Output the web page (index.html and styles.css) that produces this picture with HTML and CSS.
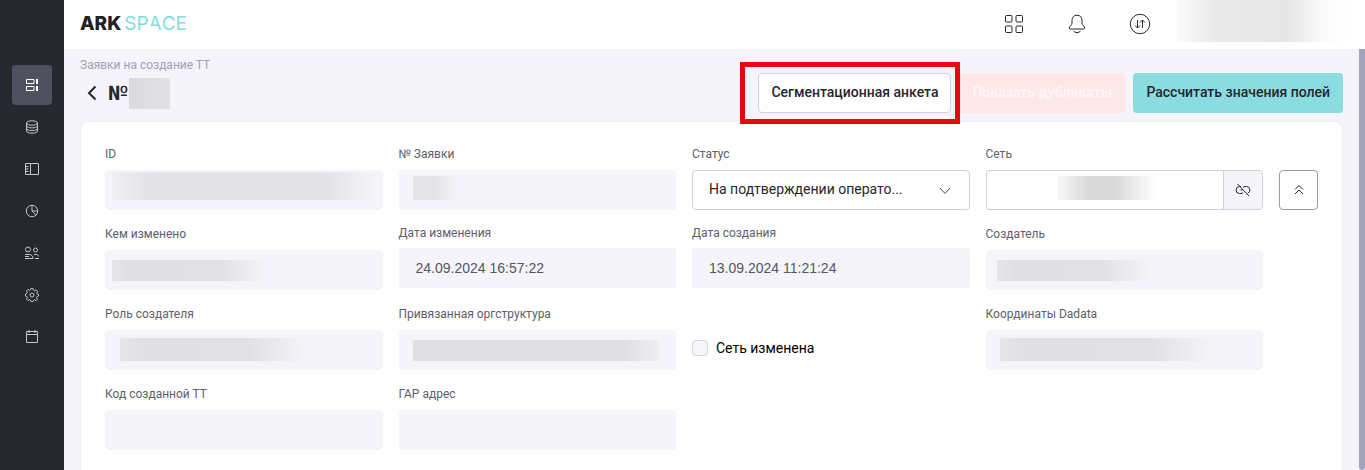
FILE: index.html
```html
<!DOCTYPE html>
<html lang="ru">
<head>
<meta charset="utf-8">
<title>ARKSPACE</title>
<link rel="stylesheet" href="styles.css">
</head>
<body>
<div class="app">
  <nav class="sidebar" aria-label="Разделы">
    <a class="nav-item active" href="#" aria-label="Заявки"><svg width="14" height="14" viewBox="0 0 14 14"><path d="M1.500 1.500h7.500v4h-7.500zM1.500 8.500h7.500v4h-7.500z"/><path d="M12 1v5M12 8v5" stroke-width="2"/></svg></a>
    <a class="nav-item" href="#" aria-label="Данные"><svg width="14" height="14" viewBox="0 0 14 14"><ellipse cx="7" cy="3" rx="5.500" ry="2.200"/><path d="M1.500 3v8c0 1.200 2.400 2.200 5.500 2.200s5.500-1 5.500-2.200V3M1.500 5.700c0 1.200 2.400 2.200 5.500 2.200s5.500-1 5.500-2.200M1.500 8.400c0 1.200 2.400 2.200 5.500 2.200s5.500-1 5.500-2.200"/></svg></a>
    <a class="nav-item" href="#" aria-label="Справочник"><svg width="14" height="14" viewBox="0 0 14 14"><path d="M.5 1.500h13v11H.5zM5.500 1.500v11M.5 4.500h3M.5 7h3M.5 9.500h3"/></svg></a>
    <a class="nav-item" href="#" aria-label="Отчёты"><svg width="14" height="14" viewBox="0 0 14 14"><circle cx="7" cy="7" r="5.700"/><path d="M7 1.300V7l4.200 4M7 7h5.700"/></svg></a>
    <a class="nav-item" href="#" aria-label="Пользователи"><svg width="14" height="14" viewBox="0 0 14 14"><circle cx="3" cy="3.500" r="2.500"/><circle cx="10.500" cy="4" r="2"/><path d="M0 8.500h4c2.500 0 4 1.500 4 4H0M9 8.500h2c1.500 0 2.500.8 2.500 1.800M10 12.500h4M0 10.500h4"/></svg></a>
    <a class="nav-item" href="#" aria-label="Настройки"><svg width="14" height="14" viewBox="0 0 14 14"><circle cx="7" cy="7" r="2"/><path d="M5.800.6h2.400l.4 1.700 1.100.5 1.500-.9 1.400 1.500-.9 1.500.5 1.100 1.300.3v1.700l-1.400.6-.5 1.100.9 1.500-1.500 1.400-1.500-.9-1 .5-.4 1.300H5.900l-.5-1.400-1.100-.5-1.500.9-1.400-1.500.9-1.500-.5-1-1.300-.4V6l1.400-.6.5-1.100-.9-1.500 1.500-1.400 1.500.9 1-.4z"/></svg></a>
    <a class="nav-item" href="#" aria-label="Календарь"><svg width="14" height="14" viewBox="0 0 14 14"><path d="M1.500 1.500h11v11h-11zM1.500 4.500h11M4 0v3M10 0v3"/></svg></a>
  </nav>

  <div class="main">
    <header class="topbar">
      <a class="logo" href="#"><b>ARK</b><span>SP</span><span class="cut">A</span><span>CE</span></a>
      <div class="tools">
        <button class="tool" aria-label="Приложения"><svg width="20" height="20" viewBox="0 0 20 20"><rect x="1.500" y="1.500" width="6.500" height="6.500" rx="1"/><rect x="12" y="1.500" width="6.500" height="6.500" rx="1"/><rect x="1.500" y="12" width="6.500" height="6.500" rx="1"/><rect x="12" y="12" width="6.500" height="6.500" rx="1"/></svg></button>
        <button class="tool" aria-label="Уведомления"><svg width="20" height="20" viewBox="0 0 20 20"><path d="M10 1.200C6.700 1.200 5 3.600 5 6.400v2.800c0 2-2.700 3.200-2.700 4.800 0 .6.500 1 1.200 1h13c.7 0 1.200-.4 1.200-1 0-1.600-2.700-2.800-2.700-4.800V6.400c0-2.800-1.700-5.200-5-5.200zM6.500 16.800c1.500 2.400 5.500 2.400 7 0"/></svg></button>
        <button class="tool" aria-label="Обмен"><svg width="22" height="22" viewBox="0 0 22 22"><circle cx="11" cy="11" r="9.700"/><path d="M8.500 7v8M6 12.500L8.500 15l2.500-2.500M13.500 15V7M11 9.500L13.500 7 16 9.500"/></svg></button>
        <div class="account"></div>
      </div>
    </header>

    <div class="scroll">
      <main class="page">
        <div class="page-head">
          <div class="heading">
            <a class="crumb" href="#">Заявки на создание ТТ</a>
            <div class="title-row">
              <button class="back" aria-label="Назад"><svg width="10" height="16" viewBox="0 0 10 16"><path d="M8.500 1.500L2 8l6.500 6.500"/></svg></button>
              <h1>№</h1><span class="number"></span>
            </div>
          </div>
          <div class="actions">
            <div class="marked"><button class="btn outline">Сегментационная анкета</button></div>
            <button class="btn pink" disabled>Показать дубликаты</button>
            <button class="btn teal">Рассчитать значения полей</button>
          </div>
        </div>

        <form class="card">
          <div class="fields">
            <div class="field"><label for="id">ID</label><div class="control"><input id="id" disabled><i class="smudge s-id"></i></div></div>
            <div class="field"><label for="num">№ Заявки</label><div class="control"><input id="num" disabled><i class="smudge s-num"></i></div></div>
            <div class="field"><label for="status">Статус</label><div class="control"><select id="status"><option>На подтверждении операто...</option></select><svg class="chevron" width="12" height="8" viewBox="0 0 12 8"><path d="M1 1l5 5.500L11 1"/></svg></div></div>
            <div class="field"><label for="net">Сеть</label><div class="control joined"><input id="net"><button type="button" class="unlink" aria-label="Отвязать"><svg width="16" height="14" viewBox="0 0 16 14"><path d="M6 3.500H4.500a3.500 3.500 0 0 0 0 7H6c.9 0 1.600-.4 2.200-1M8 4.300c.5-.5 1.200-.8 2-.8h1.500a3.500 3.500 0 0 1 1.300 6.700M5.500 7h2M2.500 1l11.500 12"/></svg></button><i class="smudge s-net"></i></div></div>

            <div class="field"><label for="editor">Кем изменено</label><div class="control"><input id="editor" disabled><i class="smudge s-editor"></i></div></div>
            <div class="field date"><label for="changed">Дата изменения</label><div class="control"><input id="changed" value="24.09.2024 16:57:22" disabled></div></div>
            <div class="field date"><label for="created">Дата создания</label><div class="control"><input id="created" value="13.09.2024 11:21:24" disabled></div></div>
            <div class="field"><label for="author">Создатель</label><div class="control"><input id="author" disabled><i class="smudge s-author"></i></div></div>

            <div class="field"><label for="role">Роль создателя</label><div class="control"><input id="role" disabled><i class="smudge s-role"></i></div></div>
            <div class="field"><label for="org">Привязанная оргструктура</label><div class="control"><input id="org" disabled><i class="smudge s-org"></i></div></div>
            <label class="check"><input type="checkbox">Сеть изменена</label>
            <div class="field"><label for="coords">Координаты Dadata</label><div class="control"><input id="coords" disabled><i class="smudge s-coords"></i></div></div>

            <div class="field"><label for="code">Код созданной ТТ</label><div class="control"><input id="code" disabled></div></div>
            <div class="field"><label for="gar">ГАР адрес</label><div class="control"><input id="gar" disabled></div></div>
          </div>
          <button type="button" class="collapse" aria-label="Свернуть"><svg width="10" height="12" viewBox="0 0 10 12"><path d="M1 5.500l4-4 4 4M1 10l4-4 4 4"/></svg></button>
        </form>
      </main>
      <div class="scrollbar"></div>
    </div>
  </div>
</div>
</body>
</html>
```

FILE: styles.css
```css
* { box-sizing: border-box; }
body { margin: 0; font: 14px/20px Roboto, "Noto Sans", sans-serif; color: #26272e; background: #f4f4fa; }
button, input, select { font: inherit; color: inherit; margin: 0; }
button { cursor: pointer; }
a { text-decoration: none; color: inherit; }
svg { display: block; fill: none; stroke: currentColor; }
.app { display: flex; min-height: 100vh; }

.sidebar { width: 64px; flex: none; background: #27282f; padding-top: 65px; display: flex; flex-direction: column; align-items: center; gap: 2px; color: #c3c4cb; }
.nav-item { width: 40px; height: 40px; border-radius: 4px; display: flex; align-items: center; justify-content: center; }
.nav-item.active { background: #50515f; color: #fff; }

.main { flex: 1; min-width: 0; display: flex; flex-direction: column; }
.topbar { height: 49px; background: #fff; display: flex; align-items: center; justify-content: space-between; padding: 0 0 1px 16px; }
.logo { display: flex; font: 400 19px/24px Inter, sans-serif; color: #7fdde0; }
.logo b { font-weight: 800; color: #202127; margin-right: 3px; }
.cut { position: relative; }
.cut::after { content: ""; position: absolute; left: 0; bottom: 4px; width: 6px; height: 6px; background: #fff; }
.tools { display: flex; align-self: stretch; align-items: center; gap: 23px; }
.tool { width: 40px; height: 40px; padding: 0; border: 0; background: none; display: flex; align-items: center; justify-content: center; }
.account { width: 188px; height: 42px; margin-left: -6px; align-self: flex-start; background: linear-gradient(90deg, #fafafa 0, #f7f7f7 10px, #e9e9ea 38px, #e6e6e7 110px, #fbfbfb 146px, #fff 180px); }

.scroll { flex: 1; display: flex; }
.page { flex: 1; min-width: 0; padding: 8px 16px 0; display: flex; flex-direction: column; gap: 8px; }
.scrollbar { width: 6px; background: #a3a4bb; border-radius: 0 0 3px 3px; }
.page-head { display: flex; justify-content: space-between; align-items: flex-end; }
.crumb { display: block; font-size: 12px; line-height: 16px; color: #9fa0b4; }
.title-row { height: 40px; display: flex; align-items: center; }
.back { border: 0; background: none; padding: 0; width: 28px; display: flex; padding-left: 7px; }
.back svg { stroke-width: 2; }
h1 { margin: 0; font-size: 20px; line-height: 24px; font-weight: 700; }
.number { width: 41px; height: 31px; margin-left: 1px; background: linear-gradient(90deg, #dadadf, #e1e1e5); }
.actions { display: flex; gap: 8px; }
.btn { height: 40px; border: 1px solid transparent; border-radius: 4px; padding: 0 12px 2px; font-weight: 500; white-space: nowrap; }
.outline { background: #fff; border-color: #cfcfe2; }
.pink { background: #ffe7e7; color: #fff5f6; font-weight: 700; }
.teal { background: #8bdce1; }
.marked { position: relative; }
.marked::after { content: ""; position: absolute; z-index: 1; inset: -11px -9px -11px -18px; border: 5px solid #e30a0f; pointer-events: none; }

.card { flex: 1; background: #fff; border: 1px solid #ececf3; border-bottom: 0; border-radius: 8px 8px 0 0; padding: 24px 24px 20px; display: flex; gap: 16px; align-items: flex-start; }
.fields { flex: 1; min-width: 0; display: grid; grid-template-columns: repeat(4, minmax(0, 1fr)); gap: 16px; }
.field { display: flex; flex-direction: column; gap: 8px; }
.field label { font-size: 12px; line-height: 16px; color: #5d5e6b; }
.field.date label { line-height: 14px; }
.control { position: relative; display: flex; }
.control input, .control select { width: 100%; min-width: 0; height: 40px; border: 1px solid #cfcfdb; border-radius: 4px; padding: 0 16px; background: #fff; }
.control input:disabled { background: #f4f4fa; border-color: #f4f4fa; color: #55565f; }
.date input { font-family: "Liberation Sans", sans-serif; }
.control select { appearance: none; padding: 0 40px 2px 16px; text-overflow: ellipsis; }
.chevron { position: absolute; right: 19px; top: 17px; pointer-events: none; color: #55565f; }
.joined input { border-radius: 4px 0 0 4px; border-right: 0; }
.unlink { flex: none; width: 40px; height: 40px; padding: 0; border: 1px solid #cfcfe0; border-radius: 0 4px 4px 0; background: #f4f4fa; display: flex; align-items: center; justify-content: center; }
.collapse { flex: none; width: 39px; height: 40px; margin-top: 24px; padding: 0; border: 1px solid #9a9baa; border-radius: 4px; background: #fff; display: flex; align-items: center; justify-content: center; }
.check { display: flex; align-items: center; align-self: end; height: 40px; gap: 8px; margin-bottom: 2px; color: #000; }
.check input { appearance: none; width: 16px; height: 16px; border: 1px solid #d4d4e4; border-radius: 4px; background: #f6f6fb; }

.smudge { position: absolute; pointer-events: none; top: 10px; height: 21px; background: linear-gradient(90deg, #e6e6ea, #dfdfe4 12%, #e0e0e5 70%, #f4f4fa); }
.s-id { left: 7px; width: 264px; top: 2px; height: 28px; background: linear-gradient(90deg, #f0f0f5, #e2e2e7 14%, #e2e2e7 80%, #f4f4fa); }
.s-num { left: 14px; width: 46px; top: 6px; height: 24px; background: linear-gradient(90deg, #e5e5ea, #e4e4e9 50%, #f4f4fa); }
.s-net { left: 71px; width: 100px; top: 6px; height: 24px; background: linear-gradient(90deg, #f8f8f8, #d9d9d9 32%, #d9d9d9 58%, #fff); }
.s-editor { left: 7px; width: 154px; }
.s-author { left: 11px; width: 152px; }
.s-role { left: 15px; width: 186px; top: 8px; height: 23px; }
.s-org { left: 14px; width: 245px; background: linear-gradient(90deg, #dedee3, #dedee3 85%, #ededf2); }
.s-coords { left: 14px; width: 212px; top: 8px; height: 23px; }
```
